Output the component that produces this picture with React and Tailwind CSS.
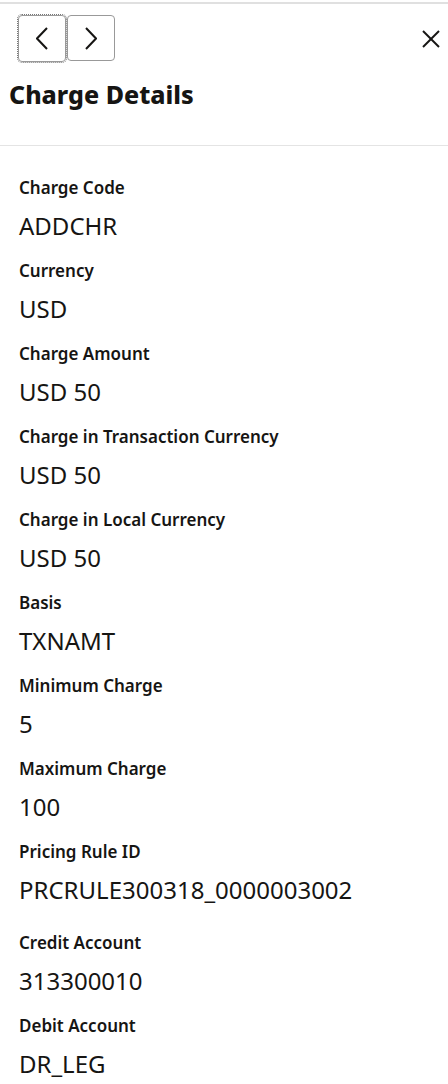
function Chevron({ dir }) {
  const pts = dir === 'left' ? '11,1 1,11.5 11,22' : '1,1 11,11.5 1,22'
  return (
    <svg width="12" height="23" viewBox="0 0 12 23" fill="none" stroke="#161513" strokeWidth="2">
      <polyline points={pts} />
    </svg>
  )
}

function App() {
  const fields = [
    { label: 'Charge Code', value: 'ADDCHR' },
    { label: 'Currency', value: 'USD' },
    { label: 'Charge Amount', value: 'USD 50' },
    { label: 'Charge in Transaction Currency', value: 'USD 50' },
    { label: 'Charge in Local Currency', value: 'USD 50' },
    { label: 'Basis', value: 'TXNAMT' },
    { label: 'Minimum Charge', value: '5' },
    { label: 'Maximum Charge', value: '100' },
    { label: 'Pricing Rule ID', value: 'PRCRULE300318_0000003002', extra: true },
    { label: 'Credit Account', value: '313300010' },
    { label: 'Debit Account', value: 'DR_LEG' },
  ]

  return (
    <div className="w-[448px] h-[1084px] bg-white text-[#161513] overflow-hidden" style={{ fontFamily: '"Noto Sans", sans-serif' }}>
      <div className="h-[2px] mt-[2px] bg-[#e0e0e0]" />
      <div className="border-b border-[#e4e4e4] h-[142px]">
        <div className="flex items-center justify-between pl-[18px] pr-[8px] pt-[11px]">
          <div className="flex">
            <button className="w-[48px] h-[47px] flex items-center justify-center border border-[#999] rounded-[4px] outline outline-1 outline-dotted outline-[#777] outline-offset-0">
              <Chevron dir="left" />
            </button>
            <button className="w-[48px] h-[46px] flex items-center justify-center border border-[#999] rounded-[4px] ml-[1px]">
              <Chevron dir="right" />
            </button>
          </div>
          <svg width="18" height="18" viewBox="0 0 18 18" stroke="#161513" strokeWidth="2">
            <line x1="1" y1="1" x2="17" y2="17" />
            <line x1="17" y1="1" x2="1" y2="17" />
          </svg>
        </div>
        <h2 className="pl-[9px] mt-[16px] text-[25px] font-extrabold leading-[32px]">Charge Details</h2>
      </div>
      <div className="pl-[19px] pt-[30px] flex flex-col">
        {fields.map((f) => (
          <div key={f.label} className={f.extra ? 'mb-[26px]' : 'mb-[18px]'}>
            <div className="h-[24px] leading-[24px] text-[17px] font-semibold">{f.label}</div>
            <div className="mt-[11px] h-[30px] leading-[30px] text-[24px]">{f.value}</div>
          </div>
        ))}
      </div>
    </div>
  )
}

export default App
